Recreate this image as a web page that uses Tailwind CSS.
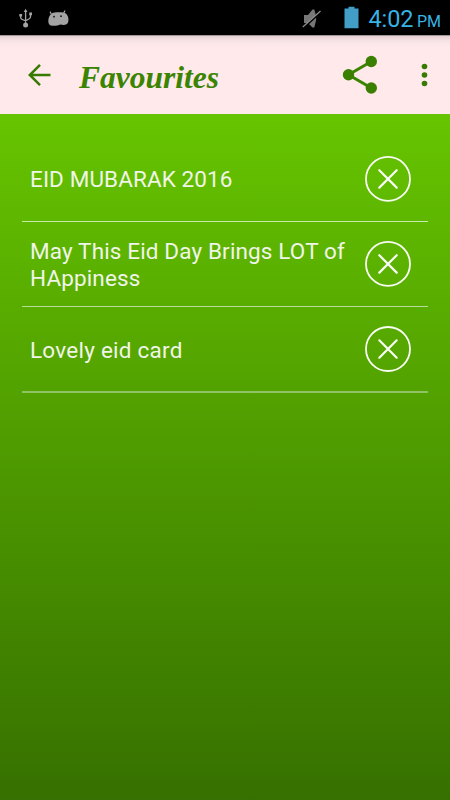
<!DOCTYPE html>
<html lang="en">

<head>
  <meta charset="UTF-8" />
  <meta name="viewport" content="width=device-width, initial-scale=1.0" />
  <title>Favourites</title>
  <script src="https://cdn.jsdelivr.net/npm/@tailwindcss/browser@4"></script>
</head>

<body class="font-[Roboto,sans-serif]">
  <div class="flex h-[800px] w-[450px] flex-col overflow-hidden">

    <!-- Status bar -->
    <div class="flex h-[35px] shrink-0 items-center justify-between bg-black pr-[4px] pl-[18px]">
      <div class="flex items-center gap-[13px]">
        <svg class="h-[20px] w-[16px]" viewBox="0 0 16 20" fill="none" stroke="#a3a3a3" stroke-width="1.3">
          <path d="M7.6 3v13M2.7 7v2.5q0 1.5 1.6 2l3.3 1.3 3.3-1.8q1.6-.8 1.6-2.5V7" />
          <path d="M7.6 .8 5.7 4h3.8zM1.3 6h2.8v2.5H1.3zM11.2 4.5H14v2.8h-2.8z" fill="#a3a3a3" stroke="none" />
          <circle cx="7.6" cy="17" r="2.5" fill="#a3a3a3" stroke="none" />
        </svg>
        <svg class="h-[18px] w-[23px]" viewBox="0 0 23 18">
          <path d="M4.3 5 3 2.6M16.5 4.5 18 1.5" stroke="#a3a3a3" stroke-width="1.2" />
          <path d="M2 8.2C3.2 4.5 6 3.2 11 3.2s8.500 .3 9.700 3.800c1.300 3.300 1 7-1.200 8.200-1.800 1.100-4.500 .7-6.100 .2-2 1.100-5 1.600-8 1.400C.8 16.800 .8 11.500 2 8.200z" fill="#a3a3a3" />
          <circle cx="7" cy="7.700" r=".9" fill="#111" />
          <circle cx="14" cy="7.200" r=".9" fill="#111" />
        </svg>
      </div>
      <div class="flex items-center">
        <svg class="h-[20px] w-[20px] translate-y-px" viewBox="0 0 20 20">
          <path d="M2 6h4l4.500-5.500h1.800q3 8 0 18h-1.800L6 14H2z" fill="#777" />
          <path d="M12.500 7q2 3 0 6" fill="none" stroke="#777" stroke-width="1.500" />
          <path d="M1.200 19 18.900 3" stroke="#000" stroke-width="2" />
          <path d="M.8 18 18.500 2" stroke="#8c8c8c" stroke-width="1.300" />
        </svg>
        <svg class="ml-[22px] h-[22px] w-[15px] -translate-y-[0.5px]" viewBox="0 0 15 22" fill="#429ec7">
          <path d="M4.500 0h6v2h4v20H.5V2h4z" />
        </svg>
        <svg class="ml-[7px] h-[30px] w-[80px]" viewBox="0 0 80 30" fill="#37b3e4">
          <text x="2.500" y="24" font-size="23.500" textLength="45">4:02</text>
          <text x="51" y="24" font-size="16" textLength="24">PM</text>
        </svg>
      </div>
    </div>

    <!-- Toolbar -->
    <header class="flex h-[79px] shrink-0 items-center border-t border-[#a29597] bg-[linear-gradient(#e3d0d3,#f7e3e5_5px,#ffe9eb_11px)] pl-[27px]">
      <svg class="h-[24px] w-[25px]" viewBox="0 0 25 24" fill="none" stroke="#367a00" stroke-width="2.500">
        <path d="M23.500 12H3M13 1.800 2.800 12 13 22.200" />
      </svg>
      <svg class="ml-[25px] h-[40px] w-[146px]" viewBox="0 0 146 40">
        <text x="2" y="33" font-family="'Liberation Serif', serif" font-size="31" font-weight="bold" font-style="italic" fill="#3a8400" textLength="140" lengthAdjust="spacingAndGlyphs">Favourites</text>
      </svg>
      <svg class="ml-[119px] h-[40px] w-[38px]" viewBox="0 0 38 40" fill="#3a7f00">
        <path d="M29.300 6.500 6.500 19.700 29.300 33" fill="none" stroke="#3a8400" stroke-width="3" />
        <circle cx="29.300" cy="6.500" r="5.700" />
        <circle cx="6.500" cy="19.700" r="5.700" />
        <circle cx="29.300" cy="33" r="5.700" />
      </svg>
      <svg class="ml-[40px] h-[24px] w-[8px]" viewBox="0 0 8 24" fill="#367a00">
        <circle cx="4.500" cy="3.500" r="2.800" />
        <circle cx="4.500" cy="12" r="2.800" />
        <circle cx="4.500" cy="20.500" r="2.800" />
      </svg>
    </header>

    <!-- Favourites list -->
    <main class="flex-1 bg-linear-to-b/srgb from-[#66c400] to-[#367000] px-[22px] pt-[22px]">
      <ul class="text-[22.5px] leading-[26.4px] text-[#f0f5e9]">
        <li class="flex h-[86px] items-center border-b border-[#c8ecaa] pl-[8px]">
          <span class="w-[335px] pt-[2px] tracking-[0.1px]">EID MUBARAK 2016</span>
          <svg class="h-[46px] w-[46px]" viewBox="0 0 46 46" fill="none" stroke="#f8fcf4">
            <circle cx="23" cy="22.900" r="22" stroke-width="1.800" />
            <path d="m14.300 14.200 17.400 17.400m0-17.400L14.300 31.600" stroke-width="2.200" stroke-linecap="round" />
          </svg>
        </li>
        <li class="flex h-[85px] items-center border-b border-[#b8dd98] pl-[8px]">
          <span class="w-[335px] pt-px tracking-[0.14px]">May This Eid Day Brings LOT of<br>HAppiness</span>
          <svg class="h-[46px] w-[46px]" viewBox="0 0 46 46" fill="none" stroke="#f8fcf4">
            <circle cx="23" cy="22.900" r="22" stroke-width="1.800" />
            <path d="m14.300 14.200 17.400 17.400m0-17.400L14.300 31.600" stroke-width="2.200" stroke-linecap="round" />
          </svg>
        </li>
        <li class="flex h-[86px] items-center border-b-2 border-[#a0cc7d]/80 pl-[8px]">
          <span class="w-[335px] pt-[2px] tracking-[0.25px]">Lovely eid card</span>
          <svg class="h-[46px] w-[46px]" viewBox="0 0 46 46" fill="none" stroke="#f8fcf4">
            <circle cx="23" cy="23" r="22" stroke-width="1.800" />
            <path d="m14.300 14.300 17.400 17.400m0-17.400L14.300 31.700" stroke-width="2.200" stroke-linecap="round" />
          </svg>
        </li>
      </ul>
    </main>

  </div>
</body>

</html>
